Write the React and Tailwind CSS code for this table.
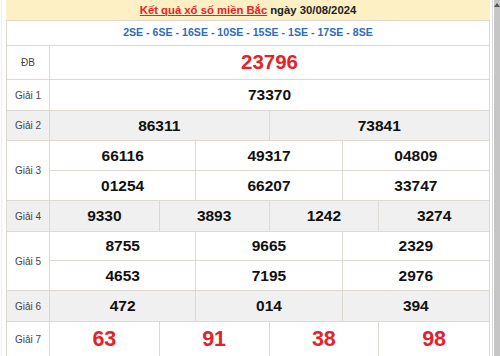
import React from "react";

const RED = "text-[#e3232a]";

function Label({ children, gray }) {
  return (
    <div
      className={`w-[43px] shrink-0 flex items-center justify-center border-r border-[#ddd9d2] text-[10px] text-[#444] ${gray ? "bg-[#f0f0f0]" : ""}`}
    >
      {children}
    </div>
  );
}

function Cells({ values, cols, gray, size, color, rowH }) {
  const colCls = cols === 2 ? "grid-cols-2" : cols === 3 ? "grid-cols-3" : cols === 4 ? "grid-cols-4" : "grid-cols-1";
  const rows = Math.ceil(values.length / cols);
  return (
    <div className={`flex-1 grid ${colCls} ${gray ? "bg-[#f0f0f0]" : ""}`}>
      {values.map((v, i) => {
        const col = i % cols;
        const row = Math.floor(i / cols);
        const right = col < cols - 1 ? "border-r" : "";
        const bottom = row < rows - 1 ? "border-b" : "";
        return (
          <div
            key={i}
            className={`flex items-center justify-center border-[#ddd9d2] font-bold ${right} ${bottom} ${size} ${color || "text-[#111]"}`}
            style={{ height: rowH[row] }}
          >
            {v}
          </div>
        );
      })}
    </div>
  );
}

function Row({ label, values, cols, gray, size, color, rowH, last }) {
  return (
    <div className={`flex ${last ? "" : "border-b"} border-[#ddd9d2]`}>
      <Label gray={gray}>{label}</Label>
      <Cells values={values} cols={cols} gray={gray} size={size} color={color} rowH={rowH} />
    </div>
  );
}

export default function App() {
  const num = "text-[15.5px]";
  return (
    <div
      className="flex w-[500px] h-[356px] overflow-hidden bg-white"
      style={{ fontFamily: '"Liberation Sans", Arial, sans-serif' }}
    >
      <div className="w-px ml-px bg-[#eeeeee]" />
      <div className="ml-[4px] w-[485px] flex flex-col">
        <div className="h-[24px] bg-[#fcf0c4] flex items-center justify-center text-[11.3px] font-bold">
          <span className="text-[#e3232a] underline">Kết quả xổ số miền Bắc</span>
          <span className="text-[#222] ml-[3px]">ngày 30/08/2024</span>
        </div>
        <div className="border-t border-x border-[#ddd9d2] flex flex-col">
          <div className="h-[25px] border-b border-[#ddd9d2] flex items-center justify-center text-[10.6px] font-bold text-[#2f6db3]">
            2SE - 6SE - 16SE - 10SE - 15SE - 1SE - 17SE - 8SE
          </div>
          <Row label="ĐB" values={["23796"]} cols={1} size="text-[20.5px]" color={RED} rowH={[33]} />
          <Row label="Giải 1" values={["73370"]} cols={1} size={num} rowH={[30]} />
          <Row label="Giải 2" values={["86311", "73841"]} cols={2} gray size={num} rowH={[29]} />
          <Row
            label="Giải 3"
            values={["66116", "49317", "04809", "01254", "66207", "33747"]}
            cols={3}
            size={num}
            rowH={[30, 29]}
          />
          <Row label="Giải 4" values={["9330", "3893", "1242", "3274"]} cols={4} gray size={num} rowH={[30]} />
          <Row
            label="Giải 5"
            values={["8755", "9665", "2329", "4653", "7195", "2976"]}
            cols={3}
            size={num}
            rowH={[29, 29]}
          />
          <Row label="Giải 6" values={["472", "014", "394"]} cols={3} gray size={num} rowH={[30]} />
          <Row label="Giải 7" values={["63", "91", "38", "98"]} cols={4} size="text-[21.5px]" color={RED} rowH={[34]} last />
        </div>
      </div>
      <div className="ml-px w-[9px] flex">
        <div className="w-px bg-white" />
        <div className="w-px bg-[#d8d8d8]" />
        <div className="w-px bg-white" />
        <div className="flex-1 bg-[#c6c6c6] flex flex-col items-center pt-[3px]">
          <div className="w-0 h-0 border-l-[3px] border-r-[3px] border-b-[4px] border-l-transparent border-r-transparent border-b-[#555]" />
        </div>
      </div>
    </div>
  );
}
